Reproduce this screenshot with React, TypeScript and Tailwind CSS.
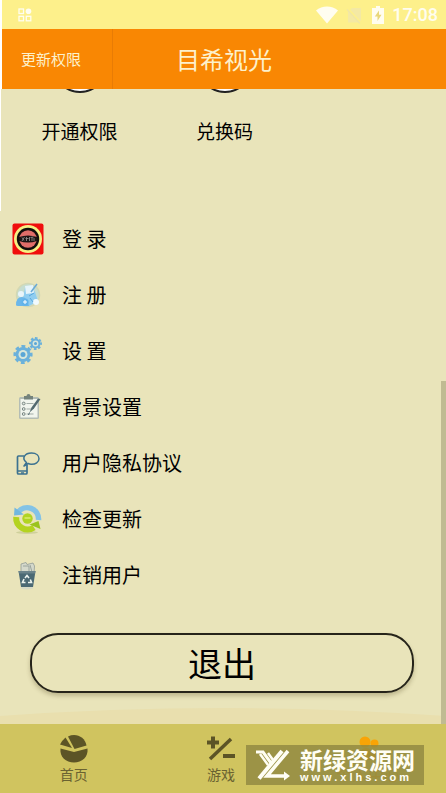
import React from "react";

const LoginIcon = () => (
  <svg viewBox="0 0 32 32" className="w-8 h-8">
    <rect x="0.5" y="0.5" width="31" height="31" rx="2" fill="#f00d0d" />
    <circle cx="16" cy="16" r="14" fill="#f6ef83" />
    <circle cx="16" cy="16" r="11.2" fill="#120d0c" />
    <circle cx="16" cy="16" r="8.8" fill="#e06d69" />
    <path d="M7 14Q16 11 25 14V18Q16 21 7 18Z" fill="#1b1414" />
    <path d="M10 14.500l2 3M12.500 14l-2.500 4M14.500 14v4M13.500 15.500h3M17.500 14v4M18.500 14.500l3-.5M20 14v4M22 15v3" stroke="#8d8887" strokeWidth="0.9" fill="none" />
  </svg>
);

const RegisterIcon = () => (
  <svg viewBox="0 0 32 32" className="w-8 h-8">
    <circle cx="16" cy="16" r="11.500" fill="#c6ddd0" stroke="#d3d8b4" strokeWidth="1.500" />
    <path d="M13 9q6-3 10 4l3 9-9 5-7-3z" fill="#8fcdf0" />
    <path d="M4 26q0-8 6-8 3 0 5 3l2 6H6q-2 0-2-1z" fill="#6bb7ea" />
    <circle cx="9" cy="15" r="3" fill="#e9f5fa" />
    <path d="M13 7l8-1 1 8-8 1z" fill="#e6f4fb" />
    <path d="M19 13l6-8" stroke="#6aa9d6" strokeWidth="1.500" />
    <circle cx="13" cy="23" r="3.600" fill="#62b3ea" />
    <path d="M13 21v4M11 23h4" stroke="#fff" strokeWidth="1" />
    <circle cx="24" cy="23" r="3" fill="#f1fafd" />
    <path d="M17 17l5-3M18 19l3 4" stroke="#5aa8dd" strokeWidth="1" />
  </svg>
);

const SettingsIcon = () => (
  <svg viewBox="0 0 32 32" className="w-8 h-8">
    <g fill="#6bb1db">
      <circle cx="11" cy="19.500" r="7.500" />
      <circle cx="11" cy="19.500" r="8" fill="none" stroke="#6bb1db" strokeWidth="3.200" strokeDasharray="3.600 2.683" transform="rotate(-12 11 19.500)" />
      <circle cx="23.500" cy="8.500" r="5" />
      <circle cx="23.500" cy="8.500" r="5.300" fill="none" stroke="#6bb1db" strokeWidth="2.400" strokeDasharray="2.400 1.763" transform="rotate(-12 23.500 8.500)" />
    </g>
    <circle cx="11" cy="19.500" r="4.500" fill="#d8e7dc" />
    <circle cx="11" cy="19.500" r="2.500" fill="#5aa6d6" />
    <circle cx="23.500" cy="8.500" r="2.900" fill="#d8e7dc" />
    <circle cx="23.500" cy="8.500" r="1.500" fill="#5aa6d6" />
  </svg>
);

const BackgroundIcon = () => (
  <svg viewBox="0 0 32 32" className="w-8 h-8">
    <rect x="7" y="6" width="20" height="22" rx="1.500" fill="#b4bdb5" />
    <rect x="8.500" y="8" width="17" height="18.500" fill="#f1f5ee" />
    <path d="M12 5h2.500a2 2 0 0 1 4 0H21v3.500h-9z" fill="#75837c" />
    <path d="M14.500 12.500h7M14.500 18h5M14.500 23h7" stroke="#a3aea8" strokeWidth="1.200" />
    <g fill="#dfe7e1" stroke="#6f7d79" strokeWidth="0.900">
      <circle cx="11.700" cy="12.500" r="1.400" />
      <circle cx="11.700" cy="18" r="1.400" />
      <circle cx="11.700" cy="23" r="1.400" />
    </g>
    <path d="M17.500 21.500l2-5 6.500-9 2.500.5-6.500 9.500z" fill="#52696f" />
    <path d="M17.500 21.500l-1 2.500" stroke="#52696f" />
  </svg>
);

const PrivacyIcon = () => (
  <svg viewBox="0 0 32 32" className="w-8 h-8" fill="none" stroke="#3c7290">
    <path d="M12 9H6.500q-1 0-1 1v16q0 1 1 1H14q1 0 1-1v-8" strokeWidth="1.700" />
    <path d="M6 24h9M9 26h3" strokeWidth="1.500" />
    <path d="M12 19l2.500-3.500C9 11 13 6 19.500 6c5 0 7.500 2.700 7.500 5.700 0 3.300-3.500 5.800-8 5.500-1.200 0-2-.3-2.800-.7z" fill="#e9e4ba" strokeWidth="1.500" strokeLinejoin="round" />
  </svg>
);

const UpdateIcon = () => (
  <svg viewBox="0 0 32 32" className="w-8 h-8">
    <ellipse cx="15" cy="29.500" rx="11" ry="1.500" fill="#cfd09b" />
    <path d="M6 9.500A11.300 11.300 0 0 1 26.500 17" fill="none" stroke="#83c3e6" strokeWidth="5.500" />
    <path d="M2.500 4.500L2 12.500l10-1z" fill="#72b7df" />
    <path d="M4.200 14A11.500 11.500 0 0 0 22 24.500" fill="none" stroke="#b4d31f" strokeWidth="6" />
    <path d="M17.500 21.500l9-3.500 2 8z" fill="#9bc31e" />
    <circle cx="15.500" cy="15.500" r="5.200" fill="#b1d422" />
    <path d="M12.500 15h6" stroke="#dcec6d" strokeWidth="1.500" />
  </svg>
);

const TrashIcon = () => (
  <svg viewBox="0 0 32 32" className="w-8 h-8">
    <ellipse cx="15" cy="29" rx="6.500" ry="1.500" fill="#d7dac6" />
    <path d="M9 5l5-1.500 1 2 6-1.500 1.500 3-.5 7H9z" fill="#d5d9cb" stroke="#929c96" strokeWidth="0.800" />
    <path d="M11 7h6v5M18 6l2 7" fill="none" stroke="#99a39c" />
    <path d="M6.500 12h17L21 28H9z" fill="#4b6974" />
    <path d="M6.500 12h17l-.4 2.500H7z" fill="#6b838a" />
    <path d="M13 19l2-2.500 2 2.500M18.300 20.500l1.200 3h-3.500M13.500 23.500h-3l1.500-3.500" fill="none" stroke="#edf4ef" strokeWidth="1.600" />
  </svg>
);

const menu = [
  { label: "登 录", icon: <LoginIcon /> },
  { label: "注 册", icon: <RegisterIcon /> },
  { label: "设 置", icon: <SettingsIcon /> },
  { label: "背景设置", icon: <BackgroundIcon /> },
  { label: "用户隐私协议", icon: <PrivacyIcon /> },
  { label: "检查更新", icon: <UpdateIcon /> },
  { label: "注销用户", icon: <TrashIcon /> },
];

function StatusBar() {
  return (
    <div className="flex h-[29px] items-center justify-between bg-[#fdf08b] pl-4 pr-2 text-[#fffdf0]">
      <svg viewBox="0 0 14 14" className="h-[14px] w-[14px]" fill="none" stroke="currentColor" strokeWidth="1.300">
        <rect x="1" y="1" width="4.500" height="4.500" />
        <circle cx="10.500" cy="3.300" r="2.800" fill="currentColor" stroke="none" />
        <rect x="1" y="8.300" width="4.500" height="4.500" />
        <rect x="8.300" y="8.300" width="4.500" height="4.500" />
      </svg>
      <div className="flex items-center">
        <svg viewBox="0 0 22 18" className="mr-2 h-[18px] w-[22px]">
          <path d="M0 4.500C6-.8 16-.8 22 4.500L11 17.500z" fill="currentColor" />
        </svg>
        <svg viewBox="0 0 16 18" className="mr-2.5 h-[18px] w-4">
          <path d="M6 2h9v14.500H2V6z" fill="#f4e9a4" />
          <path d="M1 2l14 15" stroke="#fdf08b" strokeWidth="2.200" />
          <path d="M1 3.500l13 14" stroke="#efe6a6" strokeWidth="1.200" />
        </svg>
        <svg viewBox="0 0 12 18" className="mr-2 h-[18px] w-3">
          <path d="M4 0h4v2h4v16H0V2h4z" fill="currentColor" />
          <path d="M7 4.500L2.800 10.500h2.700v4.500l4-6.300H7z" fill="#e9d77a" />
        </svg>
        <span className="font-['Roboto',sans-serif] text-[18px] font-medium leading-none">17:08</span>
      </div>
    </div>
  );
}

function TabItem({ label, children, active = false }: { label: string; children: React.ReactNode; active?: boolean }) {
  return (
    <a href="#" className={`flex flex-1 flex-col items-center pt-[10px] leading-5 ${active ? "text-[16px] text-[#e9a41c]" : "text-[14px] text-[#6a6231]"}`}>
      <svg viewBox="0 0 30 30" className="h-[30px] w-[30px]">{children}</svg>
      {label}
    </a>
  );
}

export default function App() {
  return (
    <div className="relative flex min-h-screen flex-col bg-[#e9e4ba] font-['Noto_Sans_CJK_SC',sans-serif] text-black">
      <div className="border-l-2 border-white">
        <StatusBar />
        <header className="grid h-[60px] grid-cols-[1fr_2fr_1fr] items-stretch bg-[#f98703] text-[#fdf1cb]">
          <button className="border-r border-[#e87c05] pr-3 text-[15px]">更新权限</button>
          <h1 className="self-center text-center text-[24px] leading-8">目希视光</h1>
        </header>
      </div>

      <main className="relative flex-1 overflow-hidden">
        {/* Shortcuts */}
        <div className="flex h-[122px] border-l border-white pl-[6px]">
          <a href="#" className="flex w-[145px] flex-col items-center text-[19px] leading-7">
            <span className="-mt-[50px] mb-6 h-[54px] w-[54px] shrink-0 rounded-full border-2 border-[#222] bg-white" />
            开通权限
          </a>
          <a href="#" className="flex w-[145px] flex-col items-center text-[19px] leading-7">
            <span className="-mt-[50px] mb-6 h-[54px] w-[54px] shrink-0 rounded-full border-2 border-[#222] bg-white" />
            兑换码
          </a>
        </div>

        {/* Menu */}
        <nav className="flex flex-col">
          {menu.map((item) => (
            <a key={item.label} href="#" className="flex h-14 items-center gap-[18px] px-3 text-[20px]">
              {item.icon}
              {item.label}
            </a>
          ))}
        </nav>

        <div className="pb-[31px] pl-[30px] pr-8 pt-[30px]">
          <button className="h-[60px] w-full rounded-[28px] border-2 border-[#26241a] text-[34px] leading-none shadow-[0_3px_4px_rgba(90,80,40,0.3)]">
            退出
          </button>
        </div>

        <svg viewBox="0 0 446 16" preserveAspectRatio="none" className="absolute bottom-0 left-0 h-4 w-full">
          <path d="M0 8Q223-8 446 8V16H0z" fill="#e9dfae" />
        </svg>
        <div className="absolute bottom-0 right-0 h-[54%] w-[5px] bg-[#c0bb92]" />
      </main>

      <footer className="flex h-[70px] bg-[#d0c45f] pr-1">
        <TabItem label="首页">
          <g fill="#5c5426">
            <path d="M1.500 14.500L15 18 28.500 14.500C29.500 23 23 28.500 15 28.500S.5 23 1.500 14.500z" />
            <path d="M9 2.500C17-1.500 26 3 27.500 11.500L15.500 15z" />
            <path d="M6.500 3.500L13 14 1 10.500Q3 6.500 6.500 3.500z" />
          </g>
        </TabItem>
        <TabItem label="游戏">
          <g stroke="#5c5426" fill="none">
            <path d="M1 8.500h12M7 2.500v12" strokeWidth="4" />
            <path d="M4 25L25 5" strokeWidth="3.500" />
            <path d="M17 22h12" strokeWidth="4" />
          </g>
        </TabItem>
        <TabItem label="个人中心" active>
          <g fill="#f9a406">
            <circle cx="12" cy="8" r="5.500" />
            <circle cx="21.500" cy="9.500" r="4" />
            <path d="M6 26q0-12 7-12 5 0 7 5 6-4 7 7z" />
          </g>
        </TabItem>
      </footer>

      {/* Site badge */}
      <a href="#" className="absolute bottom-[9px] right-[22px] flex h-10 w-[178px] items-center gap-2 bg-[#8f8740]/80 pl-2 text-[#fffef4]">
        <svg viewBox="0 0 38 32" className="h-8 w-[38px] shrink-0" fill="none" stroke="currentColor">
          <path d="M2 3H9L17 14" strokeWidth="3" />
          <path d="M6 5L14 16M14 4L19 11" strokeWidth="2.500" />
          <path d="M28 2L5 29.500" strokeWidth="4" />
          <path d="M34 2L13 27H31" strokeWidth="3.500" />
          <path d="M30 22.500L36 27L30 31.500Z" fill="currentColor" stroke="none" />
        </svg>
        <span className="flex flex-col items-start">
          <span className="text-[23px] font-bold leading-6">新绿资源网</span>
          <span className="font-['Liberation_Sans',sans-serif] text-[11px] font-bold leading-3 tracking-[3px]">www.xlhs.com</span>
        </span>
      </a>
    </div>
  );
}
